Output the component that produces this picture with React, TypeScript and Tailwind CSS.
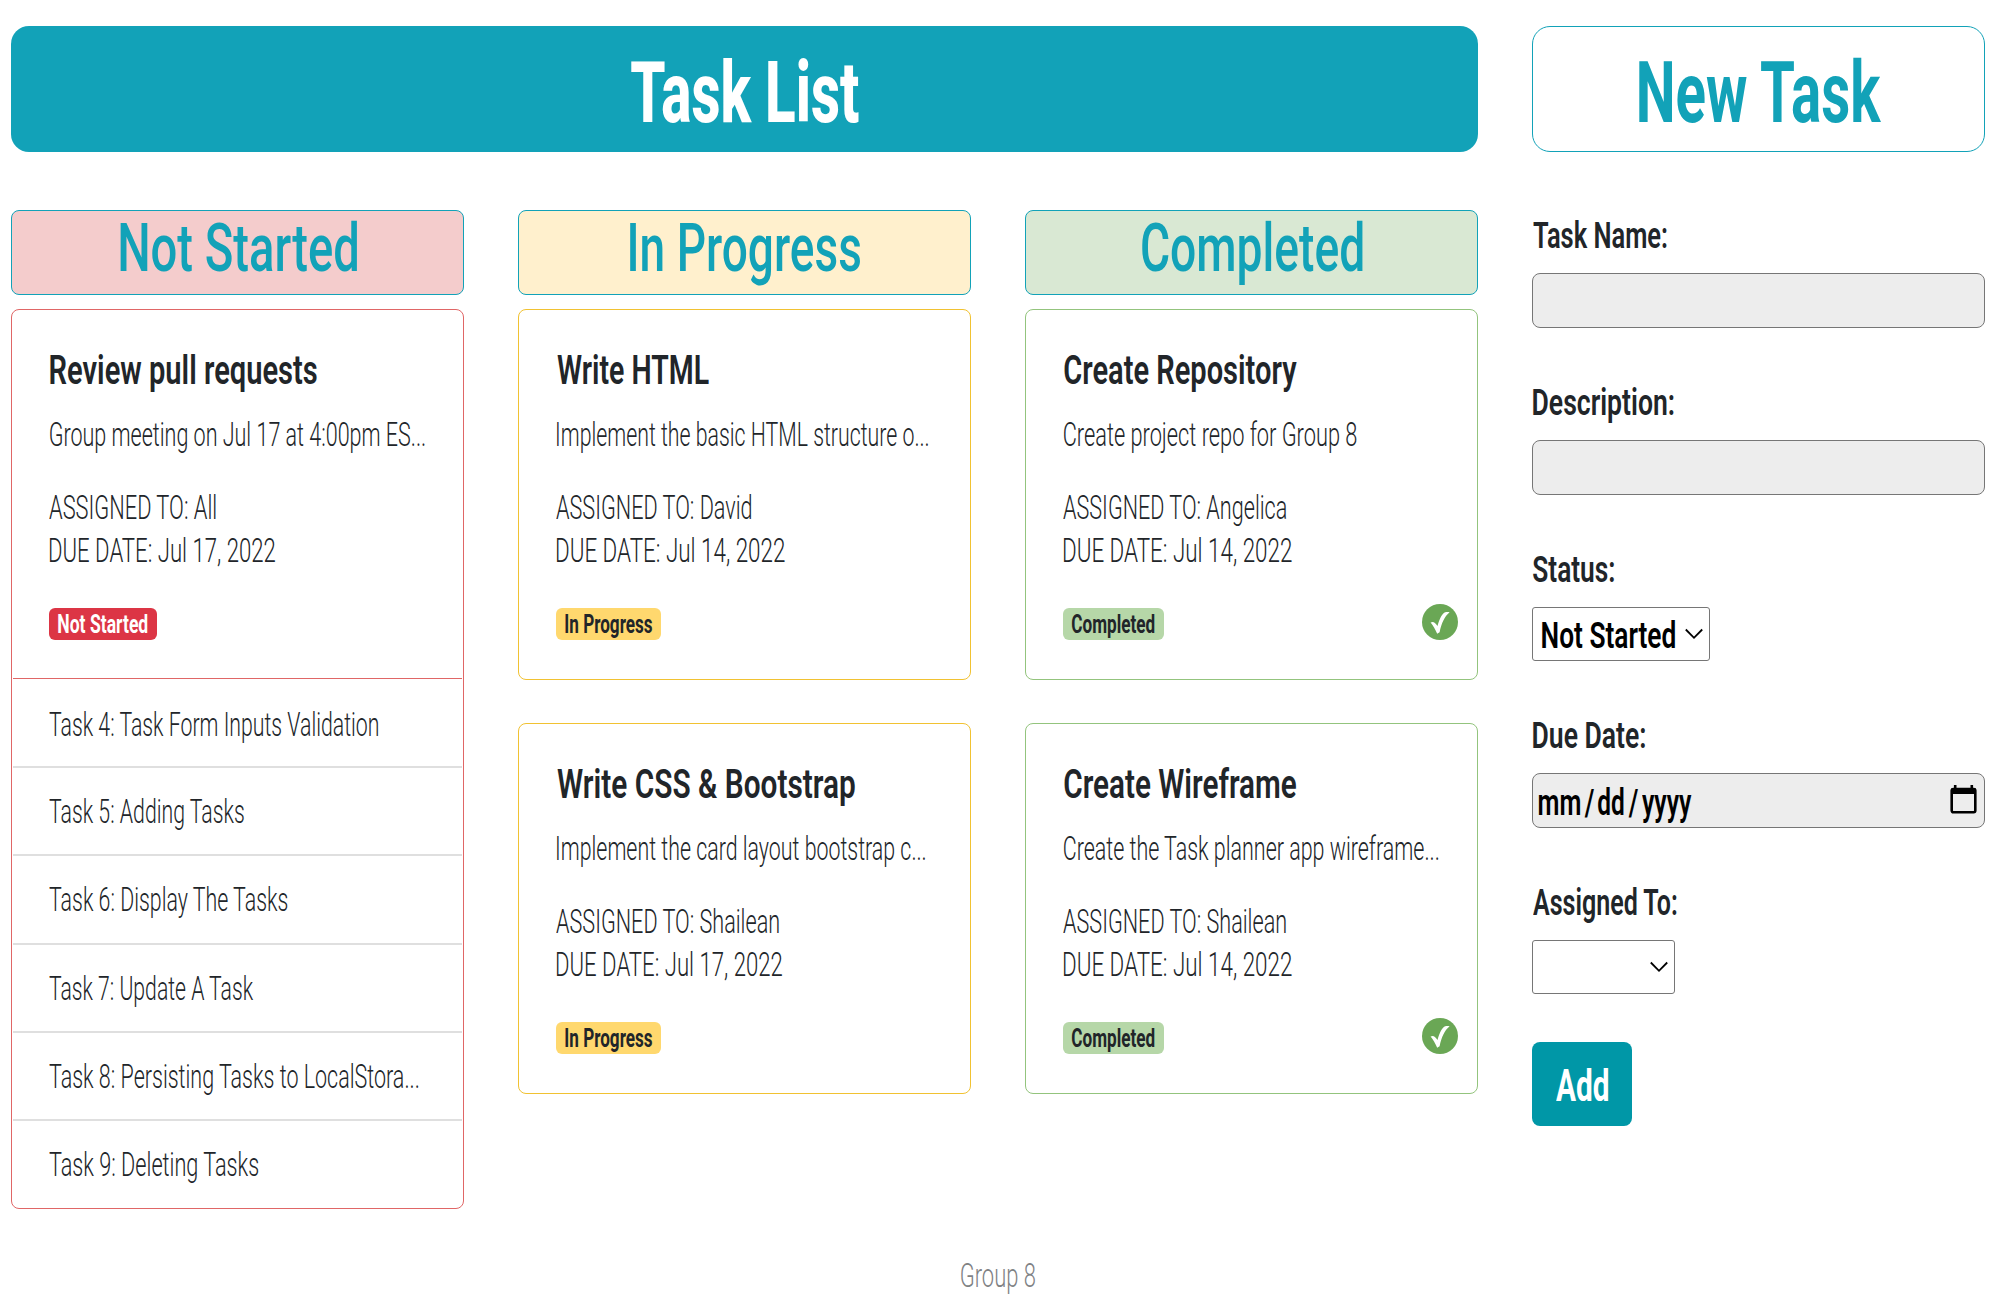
import { useLayoutEffect, useRef } from "react";

type CondensedProps = { text: string; width: number; className: string };

/** Single line of text squeezed horizontally so its ink fills exactly `width` pixels. */
function Condensed({ text, width, className }: CondensedProps) {
  const ref = useRef<HTMLSpanElement>(null);
  useLayoutEffect(() => {
    const el = ref.current;
    const ctx = document.createElement("canvas").getContext("2d");
    if (!el || !ctx) return;
    const cs = getComputedStyle(el);
    ctx.font = `${cs.fontWeight} ${cs.fontSize} ${cs.fontFamily}`;
    const m = ctx.measureText(text);
    const ink = m.actualBoundingBoxLeft + m.actualBoundingBoxRight;
    el.style.transform = `scaleX(${width / ink}) translateX(${m.actualBoundingBoxLeft}px)`;
  }, [text, width]);
  return (
    <div className={`flex shrink-0 ${className}`} style={{ width }}>
      <span ref={ref} className="block origin-left whitespace-nowrap">
        {text}
      </span>
    </div>
  );
}

type Line = [string, number];

type Task = {
  title: Line;
  description: Line;
  assigned: Line;
  due: Line;
};

type Kind = "todo" | "doing" | "done";

const badges: Record<Kind, { label: Line; className: string }> = {
  todo: { label: ["Not Started", 89.5], className: "w-[108px] bg-[#dc3545] text-white" },
  doing: { label: ["In Progress", 87], className: "w-[105px] bg-[#ffd86e]" },
  done: { label: ["Completed", 82.5], className: "w-[101px] bg-[#b6d7a8]" },
};

function CheckIcon() {
  return (
    <svg viewBox="0 0 36 36" className="mr-[-18px] mt-[-4px] h-9 w-9 shrink-0">
      <circle cx="18" cy="18" r="18" fill="#6aa755" />
      <path
        d="M8.6 18.6C10.8 17.4 12.8 17.8 15.5 22C17.6 14.2 20.4 9.3 23.2 8.3C24.6 7.8 26.2 7.9 27.6 8.2C22.6 12.2 19.4 19.4 17.6 28.2L15.2 29.8C13.4 26 11.2 21.6 8.6 18.6Z"
        fill="#fff"
      />
    </svg>
  );
}

function TaskBody({ task, kind }: { task: Task; kind: Kind }) {
  const badge = badges[kind];
  return (
    <div className="h-[369px] px-[37px] pt-[39px]">
      <Condensed text={task.title[0]} width={task.title[1]} className="ml-[0.5px] text-[41px] leading-[43px] font-semibold" />
      <Condensed text={task.description[0]} width={task.description[1]} className="mt-[21px] ml-px text-[33px] leading-[43px] font-[350]" />
      <Condensed text={task.assigned[0]} width={task.assigned[1]} className="mt-[30px] text-[33.5px] leading-[43px] font-[350]" />
      <Condensed text={task.due[0]} width={task.due[1]} className="ml-px text-[33.5px] leading-[43px] font-[350]" />
      <div className="mt-[36px] flex justify-between">
        <div className={`flex h-8 items-center justify-center rounded-md ${badge.className}`}>
          <Condensed text={badge.label[0]} width={badge.label[1]} className="mt-0.5 text-[25px] leading-8 font-bold" />
        </div>
        {kind === "done" && <CheckIcon />}
      </div>
    </div>
  );
}

const review: Task = {
  title: ["Review pull requests", 267],
  description: ["Group meeting on Jul 17 at 4:00pm ES...", 375],
  assigned: ["ASSIGNED TO: All", 167],
  due: ["DUE DATE: Jul 17, 2022", 225.5],
};

const doing: Task[] = [
  {
    title: ["Write HTML", 152],
    description: ["Implement the basic HTML structure o...", 371.5],
    assigned: ["ASSIGNED TO: David", 196],
    due: ["DUE DATE: Jul 14, 2022", 228],
  },
  {
    title: ["Write CSS & Bootstrap", 298],
    description: ["Implement the card layout bootstrap c...", 368.5],
    assigned: ["ASSIGNED TO: Shailean", 223],
    due: ["DUE DATE: Jul 17, 2022", 225.5],
  },
];

const done: Task[] = [
  {
    title: ["Create Repository", 233],
    description: ["Create project repo for Group 8", 292.5],
    assigned: ["ASSIGNED TO: Angelica", 223.5],
    due: ["DUE DATE: Jul 14, 2022", 228],
  },
  {
    title: ["Create Wireframe", 232],
    description: ["Create the Task planner app wireframe...", 375],
    assigned: ["ASSIGNED TO: Shailean", 223],
    due: ["DUE DATE: Jul 14, 2022", 228],
  },
];

const queue: Line[] = [
  ["Task 4: Task Form Inputs Validation", 329.5],
  ["Task 5: Adding Tasks", 195],
  ["Task 6: Display The Tasks", 239],
  ["Task 7: Update A Task", 205],
  ["Task 8: Persisting Tasks to LocalStora...", 370],
  ["Task 9: Deleting Tasks", 209.5],
];

function ColumnHeader({ label, className }: { label: Line; className: string }) {
  return (
    <div className={`mb-3.5 flex h-[85px] justify-center rounded-lg border border-[#12a2b8] pl-0.5 text-[#12a2b8] ${className}`}>
      <Condensed text={label[0]} width={label[1]} className="text-[66px] leading-[75px] font-medium" />
    </div>
  );
}

function Field({ label, children }: { label: Line; children: React.ReactNode }) {
  return (
    <div className="h-[166.75px]">
      <Condensed text={label[0]} width={label[1]} className="ml-[0.5px] h-[75px] text-[37px] leading-[76px] font-semibold" />
      {children}
    </div>
  );
}

function Chevron() {
  return (
    <svg viewBox="0 0 18 12" className="h-3 w-[18px] shrink-0" fill="none" stroke="#000" strokeWidth="1.8">
      <path d="M0.8 1.5L9 9.8L17.2 1.5" />
    </svg>
  );
}

function CalendarIcon() {
  return (
    <svg viewBox="0 0 27 29" className="mb-0.5 h-[29px] w-[27px]" fill="none">
      <path d="M5.2 0V4M21.8 0V4" stroke="#000" strokeWidth="2.6" />
      <rect x="1.7" y="4" width="23.6" height="23.2" rx="1.6" stroke="#000" strokeWidth="2.6" />
      <path d="M1.5 3h24v6h-24z" fill="#000" />
    </svg>
  );
}

const dateParts: Line[] = [
  ["mm", 41.5],
  ["/", 10.5],
  ["dd", 26],
  ["/", 10.5],
  ["yyyy", 49.5],
];

export default function App() {
  return (
    <div className="h-[1308px] w-[1996px] overflow-hidden bg-white px-[11px] pt-[26px] font-['Roboto','Liberation_Sans',sans-serif] text-[#212529]">
      <div className="grid grid-cols-4 gap-x-[54px]">
        <div className="col-span-3 flex h-[126px] justify-center rounded-[18px] bg-[#12a2b8] text-white">
          <Condensed text="Task List" width={228} className="text-[86px] leading-[133px] font-extrabold" />
        </div>
        <div className="flex h-[126px] justify-center rounded-[18px] border border-[#12a2b8] pl-[5px] text-[#12a2b8]">
          <Condensed text="New Task" width={243.5} className="text-[86px] leading-[131px] font-bold" />
        </div>
      </div>

      <div className="mt-[58px] grid h-[1034px] grid-cols-4 gap-x-[54px]">
        <div>
          <ColumnHeader label={["Not Started", 237.5]} className="bg-[#f4cccc]" />
          <div className="h-[900px] rounded-lg border border-[#e06666]">
            <TaskBody task={review} kind="todo" />
            <div className="mx-px -mt-px border-t border-[#e06666]">
              {queue.map(([text, width]) => (
                <div
                  key={text}
                  className="h-[88.3px] border-b-2 border-[#dfdfdf] pt-[22px] pl-9 first:h-[89px] first:pt-6 last:border-b-0"
                >
                  <Condensed text={text} width={width} className="text-[33px] leading-[43px] font-[350]" />
                </div>
              ))}
            </div>
          </div>
        </div>

        <div>
          <ColumnHeader label={["In Progress", 230.5]} className="bg-[#fff0cd]" />
          <div className="flex flex-col gap-[43px]">
            {doing.map((task) => (
              <div key={task.title[0]} className="rounded-lg border border-[#f1c232]">
                <TaskBody task={task} kind="doing" />
              </div>
            ))}
          </div>
        </div>

        <div>
          <ColumnHeader label={["Completed", 221]} className="bg-[#d9e8d3]" />
          <div className="flex flex-col gap-[43px]">
            {done.map((task) => (
              <div key={task.title[0]} className="rounded-lg border border-[#93c47d]">
                <TaskBody task={task} kind="done" />
              </div>
            ))}
          </div>
        </div>

        <div className="-mt-3">
          <Field label={["Task Name:", 133.5]}>
            <div className="h-[55px] rounded-lg border border-[#767676] bg-[#ededed]" />
          </Field>
          <Field label={["Description:", 140.5]}>
            <div className="h-[55px] rounded-lg border border-[#767676] bg-[#ededed]" />
          </Field>
          <Field label={["Status:", 81]}>
            <div className="flex h-[54px] w-[178px] items-center justify-between rounded-[3px] border border-[#767676] bg-white pr-1.5 pl-[9px] text-black">
              <Condensed text="Not Started" width={133} className="mt-[5px] text-[37px] leading-[52px] font-semibold" />
              <Chevron />
            </div>
          </Field>
          <Field label={["Due Date:", 112]}>
            <div className="flex h-[55px] items-center justify-between rounded-lg border border-[#767676] bg-[#ededed] pr-[7px] pl-1.5 text-black">
              <div className="mt-1 flex gap-[3.6px]">
                {dateParts.map(([text, width], i) => (
                  <Condensed key={i} text={text} width={width} className="text-[36px] leading-[52px] font-semibold" />
                ))}
              </div>
              <CalendarIcon />
            </div>
          </Field>
          <Field label={["Assigned To:", 144]}>
            <div className="flex h-[54px] w-[143px] items-center justify-end rounded-[3px] border border-[#767676] bg-white pr-1.5">
              <Chevron />
            </div>
          </Field>
          <div className="mt-2.5 flex h-[84px] w-[100px] justify-center rounded-lg bg-[#0097a7] text-white">
            <Condensed text="Add" width={52} className="text-[45px] leading-[87px] font-bold" />
          </div>
        </div>
      </div>

      <div className="mt-[10px] flex justify-center text-[#7f8284]">
        <Condensed text="Group 8" width={74} className="text-[33px] leading-[43px] font-[350]" />
      </div>
    </div>
  );
}
